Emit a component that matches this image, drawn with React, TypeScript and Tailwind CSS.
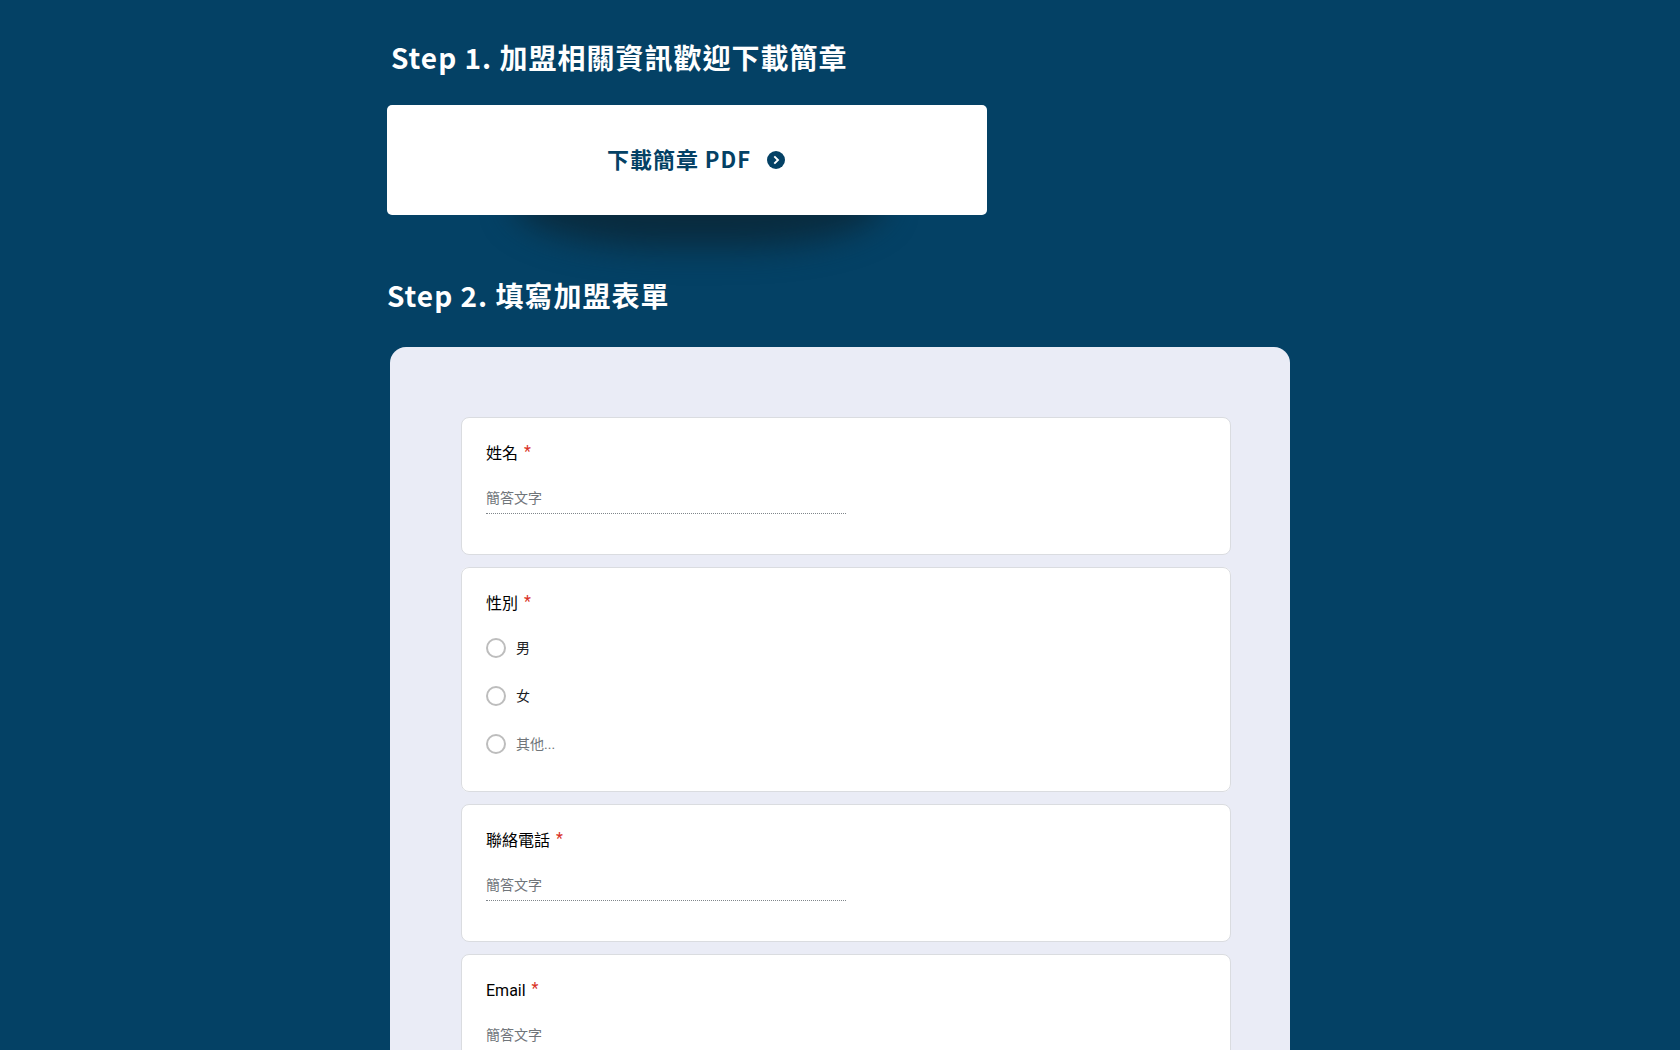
import { useId } from 'react';

interface QuestionProps {
  title: string;
}

interface Choice {
  value: string;
  text: string;
  muted?: boolean;
}

interface ChoiceQuestionProps extends QuestionProps {
  name: string;
  choices: Choice[];
}

const genders: Choice[] = [
  { value: 'male', text: '男' },
  { value: 'female', text: '女' },
  { value: 'other', text: '其他...', muted: true },
];

const ArrowIcon = () => (
  <svg width="18" height="18" viewBox="0 0 18 18" fill="none" aria-hidden="true">
    <circle cx="9" cy="9" r="9" fill="#044165" />
    <path d="M7.3 5.3L11 9L7.3 12.7" stroke="#fff" strokeWidth="1.9" />
  </svg>
);

const Required = () => <span className="text-[#d93025] leading-5" aria-hidden="true">*</span>;

const TextQuestion: React.FC<QuestionProps> = ({ title }) => {
  const id = useId();
  return (
    <div className="bg-white border border-[#dadce0] rounded-lg px-6 pt-6 pb-10">
      <label htmlFor={id} className="flex gap-1.5 text-base leading-6 text-black">
        {title}
        <Required />
      </label>
      <input
        id={id}
        type="text"
        placeholder="簡答文字"
        className="block mt-4 w-[360px] max-w-full h-8 border-b border-dotted border-[#80868b] text-sm leading-5 placeholder:text-[#70757a] outline-none"
      />
    </div>
  );
};

const ChoiceQuestion: React.FC<ChoiceQuestionProps> = ({ title, name, choices }) => {
  return (
    <fieldset className="bg-white border border-[#dadce0] rounded-lg px-6 pt-6 pb-[37px]">
      <legend className="float-left w-full flex gap-1.5 text-base leading-6 text-black">
        {title}
        <Required />
      </legend>
      <div className="clear-both flex flex-col items-start gap-7 pt-[22px]">
        {choices.map((choice) => (
          <label
            key={choice.value}
            className={`flex items-center gap-2.5 text-sm leading-5 ${choice.muted ? 'text-[#70757a]' : 'text-[#202124]'}`}
          >
            <input
              type="radio"
              name={name}
              value={choice.value}
              className="appearance-none w-5 h-5 rounded-full border-2 border-[#bdbdbd] checked:border-[6px] checked:border-[#044165]"
            />
            {choice.text}
          </label>
        ))}
      </div>
    </fieldset>
  );
};

const App: React.FC = () => {
  return (
    <main className="min-h-screen bg-[#044165] pt-[35px] px-4 font-['Noto_Sans_CJK_TC',sans-serif]">
      <div className="max-w-[906px] mx-auto">
        <h2 className="pl-1 text-[28px] leading-11 font-bold tracking-[1px] text-white">Step 1. 加盟相關資訊歡迎下載簡章</h2>

        <div className="relative mt-[26px] max-w-[600px]">
          {/* soft shadow under the download button */}
          <div className="absolute left-[126px] right-[102px] top-[50px] h-[92px] rounded-[50%/60%] bg-[#092b3e] blur-[16px]" />
          <button
            type="button"
            className="relative w-full h-[110px] rounded-[5px] bg-white flex items-center justify-center gap-4 pl-[18px] text-[22px] font-bold tracking-[1px] text-[#044165]"
          >
            <span className="pb-1">下載簡章 PDF</span>
            <ArrowIcon />
          </button>
        </div>

        <h2 className="mt-[58px] text-[28px] leading-11 font-bold tracking-[1px] text-white">Step 2. 填寫加盟表單</h2>

        <form className="mt-[30px] mx-[3px] pl-[71px] pr-[59px] pt-[70px] pb-16 rounded-2xl bg-[#eaecf6] flex flex-col gap-3 font-['Roboto','Noto_Sans_CJK_TC',sans-serif]">
          <TextQuestion title="姓名" />
          <ChoiceQuestion title="性別" name="gender" choices={genders} />
          <TextQuestion title="聯絡電話" />
          <TextQuestion title="Email" />
        </form>
      </div>
    </main>
  );
};

export default App;
